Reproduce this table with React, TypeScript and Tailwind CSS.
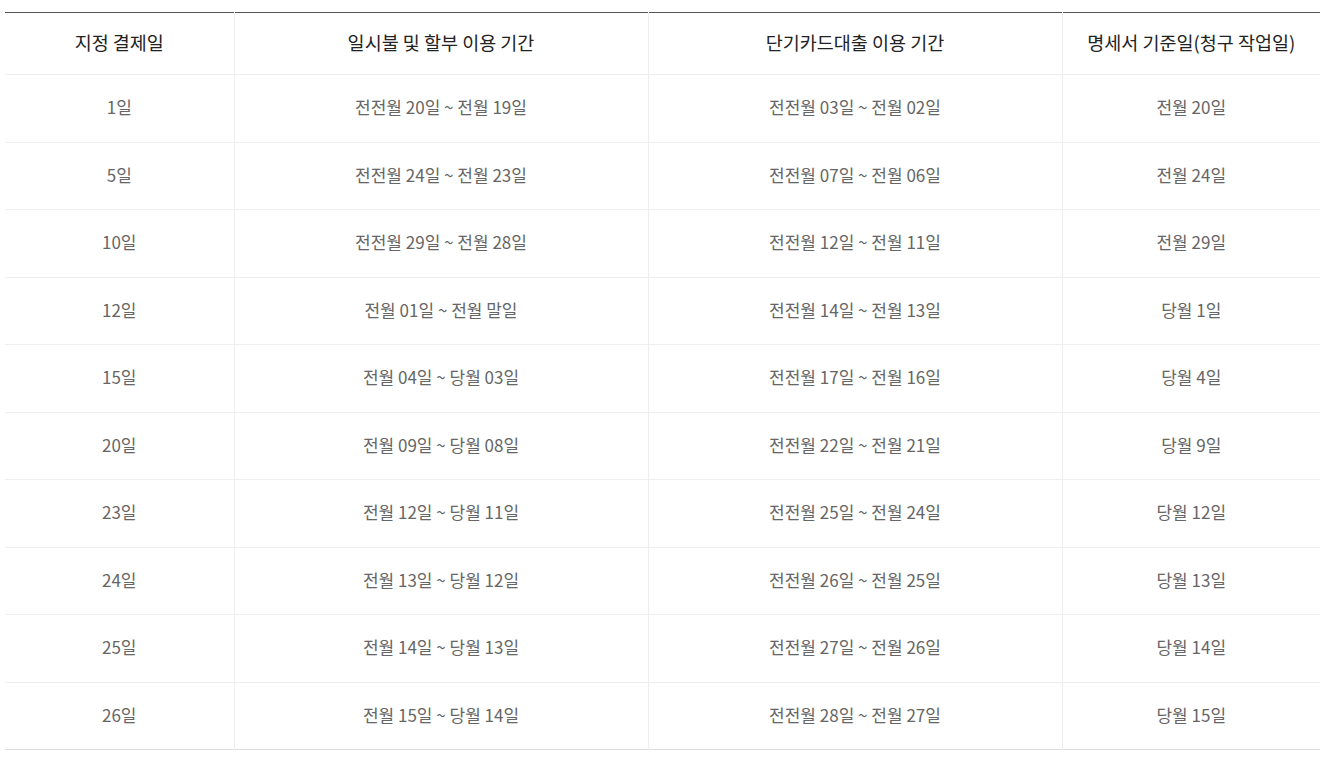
const ROWS: [string, string, string, string][] = [
  ["1일", "전전월 20일 ~ 전월 19일", "전전월 03일 ~ 전월 02일", "전월 20일"],
  ["5일", "전전월 24일 ~ 전월 23일", "전전월 07일 ~ 전월 06일", "전월 24일"],
  ["10일", "전전월 29일 ~ 전월 28일", "전전월 12일 ~ 전월 11일", "전월 29일"],
  ["12일", "전월 01일 ~ 전월 말일", "전전월 14일 ~ 전월 13일", "당월 1일"],
  ["15일", "전월 04일 ~ 당월 03일", "전전월 17일 ~ 전월 16일", "당월 4일"],
  ["20일", "전월 09일 ~ 당월 08일", "전전월 22일 ~ 전월 21일", "당월 9일"],
  ["23일", "전월 12일 ~ 당월 11일", "전전월 25일 ~ 전월 24일", "당월 12일"],
  ["24일", "전월 13일 ~ 당월 12일", "전전월 26일 ~ 전월 25일", "당월 13일"],
  ["25일", "전월 14일 ~ 당월 13일", "전전월 27일 ~ 전월 26일", "당월 14일"],
  ["26일", "전월 15일 ~ 당월 14일", "전전월 28일 ~ 전월 27일", "당월 15일"],
];

const HEADERS = ["지정 결제일", "일시불 및 할부 이용 기간", "단기카드대출 이용 기간", "명세서 기준일(청구 작업일)"];

export default function App() {
  return (
    <div className="bg-white min-h-screen pt-3 pl-[5px] font-['Noto_Sans_CJK_KR','Noto_Sans',sans-serif]">
      <table className="w-[1315px] table-fixed border-collapse border-t border-t-[#555] border-b border-b-[#ddd]">
        <colgroup>
          <col className="w-[229px]" />
          <col className="w-[414px]" />
          <col className="w-[414px]" />
          <col className="w-[258px]" />
        </colgroup>
        <thead>
          <tr>
            {HEADERS.map((h, i) => (
              <th
                key={h}
                className={`h-[62px] pb-[2px] text-[18.5px] font-normal text-[#222] text-center align-middle border-b border-[#eee] ${i > 0 ? "border-l border-l-[#eee]" : ""}`}
              >
                {h}
              </th>
            ))}
          </tr>
        </thead>
        <tbody>
          {ROWS.map((row, r) => (
            <tr key={r}>
              {row.map((cell, i) => (
                <td
                  key={i}
                  className={`h-[67.5px] pb-[3px] text-[17px] text-[#666] text-center align-middle ${r < ROWS.length - 1 ? "border-b border-b-[#eee]" : ""} ${i > 0 ? "border-l border-l-[#eee]" : ""}`}
                >
                  {cell}
                </td>
              ))}
            </tr>
          ))}
        </tbody>
      </table>
    </div>
  );
}
